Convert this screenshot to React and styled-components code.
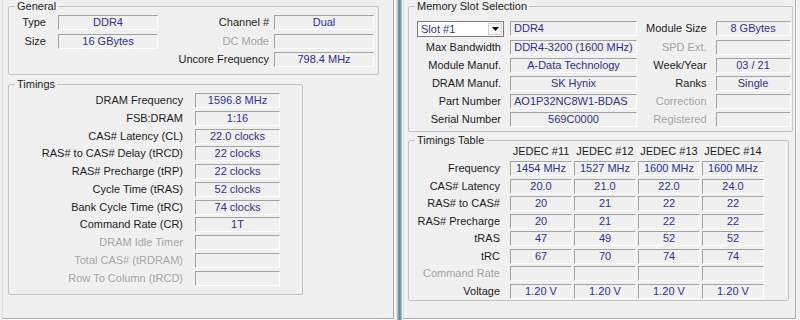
import { Fragment } from "react"
import styled, { createGlobalStyle } from "styled-components"

const Global = createGlobalStyle`
  html, body {
    margin: 0;
    padding: 0;
    background: #f0f0f0;
  }
  body {
    font-family: "Liberation Sans", Arial, sans-serif;
    font-size: 11px;
  }
`

const Screen = styled.div`
  display: flex;
  width: 800px;
  height: 320px;
  overflow: hidden;
  background: #f0f0f0;
`

const Window = styled.div`
  width: ${p => p.$w}px;
  padding-left: ${p => p.$pl}px;
  box-sizing: border-box;
  flex: none;
`

const TabPage = styled.div`
  width: ${p => p.$w}px;
  height: 319px;
  box-sizing: border-box;
  padding-left: ${p => p.$pl}px;
  border-left: 1px solid #e2e2e2;
  border-right: 1px solid #acacac;
  border-bottom: 1px solid #acacac;
  box-shadow: 1px 1px 0 #fff;
  display: flex;
  flex-direction: column;
`

const Divider = styled.div`
  width: 5px;
  flex: none;
  background: linear-gradient(to right, #c3d1db 0, #8aa3b5 20%, #6c8aa0 50%, #8aa3b5 80%, #c3d1db 100%);
`

const Group = styled.fieldset`
  margin: ${p => p.$mt || 0}px 0 0 0;
  padding: ${p => p.$pt}px 0 ${p => p.$pb}px 0;
  width: ${p => p.$w}px;
  min-width: 0;
  box-sizing: border-box;
  border: 1px solid #c4c4c4;
  border-radius: 2px;
`

const Legend = styled.legend`
  margin-left: 6px;
  padding: 0 2px;
  line-height: 13px;
  color: #1e1e1e;
`

const GeneralGrid = styled.div`
  display: grid;
  grid-template-columns: 44px 100px 1fr 100px;
  grid-auto-rows: 15px;
  column-gap: 5px;
  row-gap: 3.5px;
  padding-right: 4px;
`

const TimingsGrid = styled.div`
  display: grid;
  grid-template-columns: 174px 85px;
  grid-auto-rows: 15px;
  column-gap: 12px;
  row-gap: 2.77px;
`

const SlotGrid = styled.div`
  display: grid;
  grid-template-columns: 92px 127px 1fr 75px;
  grid-template-rows: 16px;
  grid-auto-rows: 15px;
  column-gap: 9px;
  row-gap: 3px;
  padding-right: 6px;
`

const TableGrid = styled.div`
  display: grid;
  grid-template-columns: 99px repeat(4, 62px);
  grid-template-rows: 15px;
  grid-auto-rows: 15px;
  column-gap: 2px;
  row-gap: 2.45px;
  margin-top: -3px;
`

const Label = styled.div`
  text-align: right;
  white-space: nowrap;
  line-height: 15px;
  color: ${p => (p.$dim ? "#a6a6a6" : "#1c1c1c")};
  padding-right: ${p => p.$pr || 0}px;
`

const Head = styled.div`
  text-align: center;
  line-height: 15px;
  color: #1c1c1c;
  white-space: nowrap;
`

const Value = styled.div`
  height: 15px;
  box-sizing: border-box;
  border: 1px solid;
  border-color: #a3a3a3 #fdfdfd #fdfdfd #a3a3a3;
  padding: 0 3px;
  line-height: 13px;
  color: #30308c;
  text-align: ${p => (p.$left ? "left" : "center")};
  white-space: nowrap;
  overflow: hidden;
`

const SlotSelect = styled.div`
  display: flex;
  width: 87px;
  height: 16px;
  margin-left: 8px;
  box-sizing: border-box;
  border: 1px solid #7c7c7c;
  background: #fff;
`

const SlotText = styled.div`
  flex: 1;
  padding-left: 3px;
  line-height: 14px;
  color: #30308c;
`

const DropButton = styled.div`
  width: 14px;
  margin: 1px;
  box-sizing: border-box;
  border: 1px solid #d2d2d2;
  background: #f6f6f6;
  display: flex;
  align-items: center;
  justify-content: center;
`

const Blank = styled.div``

const general = [
  ["Type", "DDR4", "Channel #", "Dual"],
  ["Size", "16 GBytes", "DC Mode", "", false, true],
]

const timings = [
  ["DRAM Frequency", "1596.8 MHz"],
  ["FSB:DRAM", "1:16"],
  ["CAS# Latency (CL)", "22.0 clocks"],
  ["RAS# to CAS# Delay (tRCD)", "22 clocks"],
  ["RAS# Precharge (tRP)", "22 clocks"],
  ["Cycle Time (tRAS)", "52 clocks"],
  ["Bank Cycle Time (tRC)", "74 clocks"],
  ["Command Rate (CR)", "1T"],
  ["DRAM Idle Timer", "", true],
  ["Total CAS# (tRDRAM)", "", true],
  ["Row To Column (tRCD)", "", true],
]

const slotRows = [
  { label: "Max Bandwidth", value: "DDR4-3200 (1600 MHz)", side: "SPD Ext.", sideValue: "", dim: true },
  { label: "Module Manuf.", value: "A-Data Technology", side: "Week/Year", sideValue: "03 / 21" },
  { label: "DRAM Manuf.", value: "SK Hynix", side: "Ranks", sideValue: "Single" },
  { label: "Part Number", value: "AO1P32NC8W1-BDAS", left: true, side: "Correction", sideValue: "", dim: true },
  { label: "Serial Number", value: "569C0000", side: "Registered", sideValue: "", dim: true },
]

const table = [
  ["Frequency", ["1454 MHz", "1527 MHz", "1600 MHz", "1600 MHz"]],
  ["CAS# Latency", ["20.0", "21.0", "22.0", "24.0"]],
  ["RAS# to CAS#", ["20", "21", "22", "22"]],
  ["RAS# Precharge", ["20", "21", "22", "22"]],
  ["tRAS", ["47", "49", "52", "52"]],
  ["tRC", ["67", "70", "74", "74"]],
  ["Command Rate", ["", "", "", ""], true],
  ["Voltage", ["1.20 V", "1.20 V", "1.20 V", "1.20 V"]],
]

function Arrow() {
  return (
    <svg width="7" height="4" viewBox="0 0 7 4">
      <path d="M0 0h7L3.5 4z" fill="#000" />
    </svg>
  )
}

function MemoryTab() {
  return (
    <TabPage $w={392} $pl={5}>
      <Group $w={371} $pt={2} $pb={7}>
        <Legend>General</Legend>
        <GeneralGrid>
          {general.map(([l, v, l2, v2, d1, d2]) => (
            <Fragment key={l}>
              <Label $pr={7} $dim={d1}>{l}</Label>
              <Value>{v}</Value>
              <Label $dim={d2}>{l2}</Label>
              <Value>{v2}</Value>
            </Fragment>
          ))}
          <Blank />
          <Blank />
          <Label>Uncore Frequency</Label>
          <Value>798.4 MHz</Value>
        </GeneralGrid>
      </Group>
      <Group $w={295} $mt={3} $pt={2} $pb={8}>
        <Legend>Timings</Legend>
        <TimingsGrid>
          {timings.map(([l, v, dim]) => (
            <Fragment key={l}>
              <Label $dim={dim}>{l}</Label>
              <Value>{v}</Value>
            </Fragment>
          ))}
        </TimingsGrid>
      </Group>
    </TabPage>
  )
}

function SpdTab() {
  return (
    <TabPage $w={393} $pl={4}>
      <Group $w={385} $pt={8} $pb={4}>
        <Legend>Memory Slot Selection</Legend>
        <SlotGrid>
          <SlotSelect>
            <SlotText>Slot #1</SlotText>
            <DropButton><Arrow /></DropButton>
          </SlotSelect>
          <Value $left>DDR4</Value>
          <Label>Module Size</Label>
          <Value>8 GBytes</Value>
          {slotRows.map(r => (
            <Fragment key={r.label}>
              <Label>{r.label}</Label>
              <Value $left={r.left}>{r.value}</Value>
              <Label $dim={r.dim}>{r.side}</Label>
              <Value>{r.sideValue}</Value>
            </Fragment>
          ))}
        </SlotGrid>
      </Group>
      <Group $w={381} $mt={2} $pt={0} $pb={1}>
        <Legend>Timings Table</Legend>
        <TableGrid>
          <Blank />
          {["JEDEC #11", "JEDEC #12", "JEDEC #13", "JEDEC #14"].map(h => (
            <Head key={h}>{h}</Head>
          ))}
          {table.map(([l, vals, dim]) => (
            <Fragment key={l}>
              <Label $pr={8} $dim={dim}>{l}</Label>
              {vals.map((v, i) => (
                <Value key={i}>{v}</Value>
              ))}
            </Fragment>
          ))}
        </TableGrid>
      </Group>
    </TabPage>
  )
}

export default function App() {
  return (
    <>
      <Global />
      <Screen>
        <Window $w={397} $pl={2}>
          <MemoryTab />
        </Window>
        <Divider />
        <Window $w={398} $pl={1}>
          <SpdTab />
        </Window>
      </Screen>
    </>
  )
}
